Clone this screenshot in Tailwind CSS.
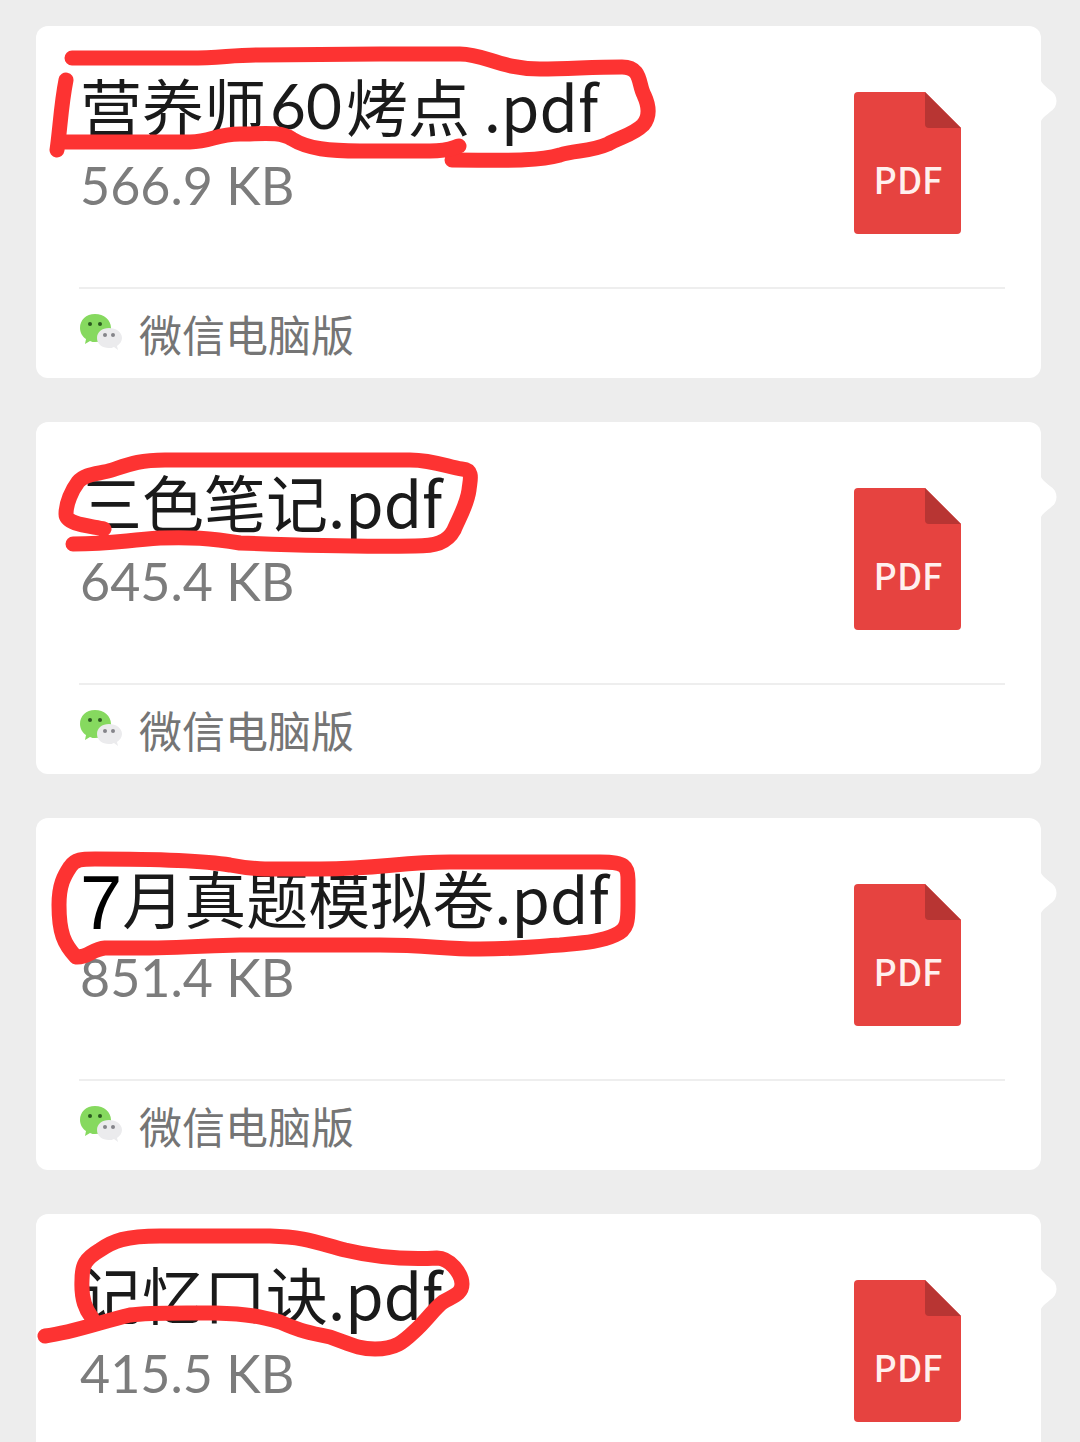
<!DOCTYPE html>
<html lang="zh-CN">
<head>
  <meta charset="UTF-8">
  <meta name="viewport" content="width=device-width, initial-scale=1.0">
  <title>文件</title>
  <!-- Tailwind CSS -->
  <script src="https://cdn.jsdelivr.net/npm/@tailwindcss/browser@4"></script>
</head>
<body class="bg-[#ededed] font-['Noto_Sans_CJK_SC',sans-serif]">
  <!-- Shared icons -->
  <svg class="hidden" aria-hidden="true">
    <symbol id="wechat" viewBox="0 0 44 40">
      <path d="M16 0C7 0 1 6 1 14c0 5 3 9 6 11l-1 5 5-3c2 1 3 1 5 1 9 0 16-6 16-14S25 0 16 0Z" fill="#86d95f"/>
      <path d="M30 14c-7 0-12 4-12 10s5 10 12 10c2 0 3 0 5-1l4 3-1-4c3-2 5-5 5-8 0-6-6-10-13-10Z" fill="#ebebed"/>
      <circle cx="11" cy="10" r="2" fill="#2c5a20"/>
      <circle cx="21" cy="10" r="2" fill="#2c5a20"/>
      <circle cx="26" cy="21" r="2" fill="#85858a"/>
      <circle cx="34" cy="21" r="2" fill="#85858a"/>
    </symbol>
    <symbol id="tail" viewBox="0 0 16 40">
      <path d="M0 0C2 5 12 10 14 14Q17 20 14 26C12 30 2 35 0 40Z" fill="#fff"/>
    </symbol>
  </svg>

  <main class="flex h-screen flex-col gap-11 overflow-hidden pt-[26px] pr-[39px] pl-9">
    <!-- File 1 -->
    <article class="relative shrink-0 rounded-xl bg-white">
      <div class="flex h-[261px] justify-between pr-20 pl-11">
        <div class="pt-[39px]">
          <h2 class="flex h-20 items-center text-[62px] leading-none whitespace-pre text-[#1a1a1a]">营养师<span class="mx-1 font-['Lato',sans-serif]">60</span>烤点 .pdf</h2>
          <p class="mt-2 font-['Lato',sans-serif] text-[52px] leading-[64px] text-[#7c7c7c]">566.9 KB</p>
        </div>
        <svg class="mt-[66px] h-[142px] w-[107px] shrink-0" viewBox="0 0 107 142">
          <path d="M4 0H71L107 36V138q0 4-4 4H4q-4 0-4-4V4q0-4 4-4Z" fill="#e64340"/>
          <path d="M71 0L107 36H75q-4 0-4-4Z" fill="#b83533"/>
          <text x="54" y="102" text-anchor="middle" class="fill-[#fff0ee] text-[36px] font-medium">PDF</text>
        </svg>
      </div>
      <footer class="mr-9 ml-[43px] flex h-[91px] items-center gap-4 border-t-2 border-[#eeeeee]">
        <svg class="h-10 w-11"><use href="#wechat"/></svg>
        <span class="text-[43px] leading-none text-[#757575]">微信电脑版</span>
      </footer>
      <svg class="absolute top-[55px] left-full h-10 w-4"><use href="#tail"/></svg>
      <svg class="absolute top-0 left-0 h-[352px] w-[1005px] overflow-visible" viewBox="36 26 1005 352" fill="none" stroke="#fd3332" stroke-width="15" stroke-linecap="round" stroke-linejoin="round">
        <path d="M72 58H190C220 58 232 55 260 55L380 54H460C485 54 500 69 540 69C570 69 590 67 622 67C642 67 638 84 644 95C650 108 649 118 643 125C633 135 620 137 608 144C590 152 575 150 560 155C535 162 500 160 452 160"/>
        <path d="M66 80C61 105 60 130 57 150M60 142H190C212 142 215 134 240 134C262 134 280 131 292 139C308 149 330 151 360 151H430C448 151 452 148 459 146"/>
      </svg>
    </article>

    <!-- File 2 -->
    <article class="relative shrink-0 rounded-xl bg-white">
      <div class="flex h-[261px] justify-between pr-20 pl-11">
        <div class="pt-[39px]">
          <h2 class="flex h-20 items-center text-[62px] leading-none whitespace-pre text-[#1a1a1a]">三色笔记.pdf</h2>
          <p class="mt-2 font-['Lato',sans-serif] text-[52px] leading-[64px] text-[#7c7c7c]">645.4 KB</p>
        </div>
        <svg class="mt-[66px] h-[142px] w-[107px] shrink-0" viewBox="0 0 107 142">
          <path d="M4 0H71L107 36V138q0 4-4 4H4q-4 0-4-4V4q0-4 4-4Z" fill="#e64340"/>
          <path d="M71 0L107 36H75q-4 0-4-4Z" fill="#b83533"/>
          <text x="54" y="102" text-anchor="middle" class="fill-[#fff0ee] text-[36px] font-medium">PDF</text>
        </svg>
      </div>
      <footer class="mr-9 ml-[43px] flex h-[91px] items-center gap-4 border-t-2 border-[#eeeeee]">
        <svg class="h-10 w-11"><use href="#wechat"/></svg>
        <span class="text-[43px] leading-none text-[#757575]">微信电脑版</span>
      </footer>
      <svg class="absolute top-[55px] left-full h-10 w-4"><use href="#tail"/></svg>
      <svg class="absolute top-0 left-0 h-[352px] w-[1005px] overflow-visible" viewBox="36 422 1005 352" fill="none" stroke="#fd3332" stroke-width="15" stroke-linecap="round" stroke-linejoin="round">
        <path d="M104 529C92 526 66 525 66 514C66 503 72 490 78 482C85 473 100 474 112 470C130 464 140 460 165 460H410C435 460 450 468 462 469C474 470 470 480 469 490C467 505 459 518 454 530C447 543 435 546 415 546C360 547 290 545 240 543C210 538 190 537 160 538C120 541 110 544 73 544"/>
      </svg>
    </article>

    <!-- File 3 -->
    <article class="relative shrink-0 rounded-xl bg-white">
      <div class="flex h-[261px] justify-between pr-20 pl-11">
        <div class="pt-[39px]">
          <h2 class="flex h-20 items-center text-[62px] leading-none whitespace-pre text-[#1a1a1a]"><span class="pt-3 font-['Liberation_Sans',sans-serif] text-[76px] text-black">7</span>月真题模拟卷.pdf</h2>
          <p class="mt-2 font-['Lato',sans-serif] text-[52px] leading-[64px] text-[#7c7c7c]">851.4 KB</p>
        </div>
        <svg class="mt-[66px] h-[142px] w-[107px] shrink-0" viewBox="0 0 107 142">
          <path d="M4 0H71L107 36V138q0 4-4 4H4q-4 0-4-4V4q0-4 4-4Z" fill="#e64340"/>
          <path d="M71 0L107 36H75q-4 0-4-4Z" fill="#b83533"/>
          <text x="54" y="102" text-anchor="middle" class="fill-[#fff0ee] text-[36px] font-medium">PDF</text>
        </svg>
      </div>
      <footer class="mr-9 ml-[43px] flex h-[91px] items-center gap-4 border-t-2 border-[#eeeeee]">
        <svg class="h-10 w-11"><use href="#wechat"/></svg>
        <span class="text-[43px] leading-none text-[#757575]">微信电脑版</span>
      </footer>
      <svg class="absolute top-[55px] left-full h-10 w-4"><use href="#tail"/></svg>
      <svg class="absolute top-0 left-0 h-[352px] w-[1005px] overflow-visible" viewBox="36 818 1005 352" fill="none" stroke="#fd3332" stroke-width="15" stroke-linecap="round" stroke-linejoin="round">
        <path d="M76 957C64 944 59 933 59 905C59 885 64 876 70 867C75 859 82 859 95 859C150 859 200 860 230 865C255 870 270 869 320 869C380 869 400 862 450 862H600C625 862 628 866 628 880V905C628 920 628 930 615 935C600 942 580 943 560 945C530 947 515 949 480 949C440 949 430 945 380 945H240C190 946 180 948 150 948H105C92 949 88 958 76 957Z"/>
      </svg>
    </article>

    <!-- File 4 -->
    <article class="relative shrink-0 rounded-xl bg-white">
      <div class="flex h-[261px] justify-between pr-20 pl-11">
        <div class="pt-[39px]">
          <h2 class="flex h-20 items-center text-[62px] leading-none whitespace-pre text-[#1a1a1a]">记忆口诀.pdf</h2>
          <p class="mt-2 font-['Lato',sans-serif] text-[52px] leading-[64px] text-[#7c7c7c]">415.5 KB</p>
        </div>
        <svg class="mt-[66px] h-[142px] w-[107px] shrink-0" viewBox="0 0 107 142">
          <path d="M4 0H71L107 36V138q0 4-4 4H4q-4 0-4-4V4q0-4 4-4Z" fill="#e64340"/>
          <path d="M71 0L107 36H75q-4 0-4-4Z" fill="#b83533"/>
          <text x="54" y="102" text-anchor="middle" class="fill-[#fff0ee] text-[36px] font-medium">PDF</text>
        </svg>
      </div>
      <svg class="absolute top-[55px] left-full h-10 w-4"><use href="#tail"/></svg>
      <svg class="absolute top-0 left-0 h-[352px] w-[1005px] overflow-visible" viewBox="36 1214 1005 352" fill="none" stroke="#fd3332" stroke-width="15" stroke-linecap="round" stroke-linejoin="round">
        <path d="M45 1336C75 1332 100 1322 130 1315C150 1312 190 1313 215 1313C250 1314 262 1317 280 1322C300 1331 310 1333 330 1337C350 1344 358 1349 375 1349C398 1349 405 1340 418 1328C430 1316 435 1308 443 1302C453 1296 462 1294 462 1284C462 1274 450 1258 437 1258C400 1260 370 1256 345 1250C315 1242 305 1237 270 1236H160C125 1236 113 1241 100 1250C85 1259 82 1265 82 1280C81 1300 86 1310 92 1318"/>
      </svg>
    </article>
  </main>
</body>
</html>
